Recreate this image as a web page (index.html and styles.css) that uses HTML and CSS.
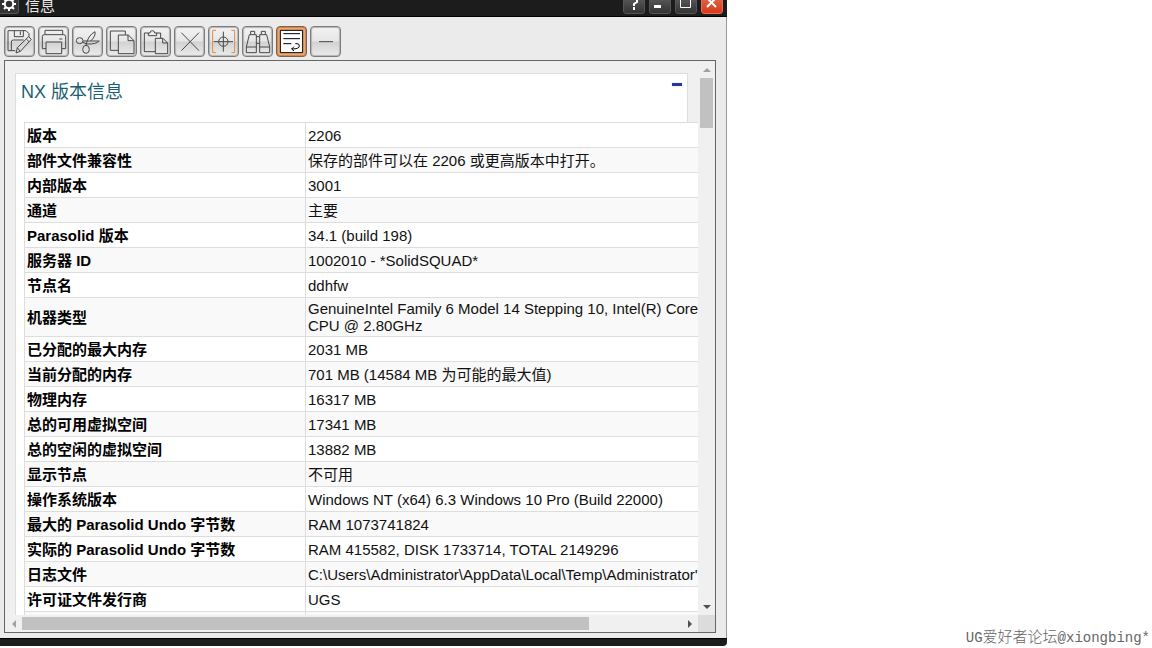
FILE: index.html
```html
<!DOCTYPE html>
<html lang="zh-CN">
<head>
<meta charset="utf-8">
<title>信息</title>
<link rel="stylesheet" href="styles.css">
</head>
<body>
<main class="window">
  <header class="titlebar">
    <span class="gear"><svg viewBox="0 0 18 18"><circle cx="9" cy="9" r="4.2"/><path d="M9 2v3M9 13v3M2 9h3M13 9h3M4 4l2 2M12 12l2 2M14 4l-2 2M4 14l2-2"/></svg></span>
    <h1 class="title">信息</h1>
    <div class="controls">
      <button class="ctl" aria-label="帮助"><svg viewBox="0 0 22 22"><path d="M8 8V6h6v4l-3 2v2M11 15v3"/></svg></button>
      <button class="ctl" aria-label="最小化"><svg viewBox="0 0 22 22"><path d="M5 14.500h7" stroke-width="3"/></svg></button>
      <button class="ctl" aria-label="最大化"><svg viewBox="0 0 22 22"><path d="M5.500 5.500h10v10h-10z" stroke-width="1"/></svg></button>
      <button class="ctl close" aria-label="关闭"><svg viewBox="0 0 22 22"><path d="M6 6l9 9M15 6l-9 9"/></svg></button>
    </div>
  </header>
  <div class="content">
    <div class="toolbar">
      <button class="tool" aria-label="另存为"><svg viewBox="12 78 93 93"><path d="M87 110V101L78 92H24V152H46M43 92V110H70V92M61 94V105M34 152V126Q34 120 40 120H71M48 159L52 143L86 110L94 118L61 154ZM52 143L61 154M79 117L87 125"/></svg></button>
      <button class="tool" aria-label="打印"><svg viewBox="114 78 93 93"><path d="M138 146H127V110Q127 104 133 104H191Q197 104 197 110V146H186M135 104V91H188V104M138 126H185V161H138ZM178 117H187"/></svg></button>
      <button class="tool" aria-label="剪切"><svg viewBox="216 78 93 93"><ellipse cx="239" cy="122" rx="10" ry="9"/><ellipse cx="258" cy="148" rx="10" ry="12"/><path d="M249 123L298 123Q289 133 261 132L248 127M285 95Q263 107 258 136M285 95Q288 108 272 123"/></svg></button>
      <button class="tool" aria-label="复制"><svg viewBox="318 78 93 93"><path d="M355 151H331V93H376V104M355 105H385L402 122V161H355ZM384 105V122H402"/></svg></button>
      <button class="tool" aria-label="粘贴"><svg viewBox="420 78 93 93"><path d="M445 99H433V155H465M469 99H482V114M445 99V107H470V99H464Q464 92 457 92Q450 92 450 99ZM466 115H489L503 129V161H466ZM488 115V129H503"/></svg></button>
      <button class="tool" aria-label="删除"><svg viewBox="12 78 93 93"><path d="M34 98L87 152M87 98L34 152"/></svg></button>
      <button class="tool" aria-label="选择"><svg viewBox="114 78 93 93"><path class="accent" d="M138 91H128V158H138M184 91H194V158H184"/><circle cx="160" cy="125" r="14"/><path d="M160 95V155M131 125H189"/></svg></button>
      <button class="tool" aria-label="查找"><svg viewBox="216 78 93 93"><path d="M242 94H254V104H259V158H229V141L238 104H242ZM229 141H259M242 104H254M286 94H274V104H269V158H299V141L290 104H286ZM269 141H299M274 104H286M259 110H269M259 130H269"/></svg></button>
      <button class="tool active" aria-label="自动换行" aria-pressed="true"><svg viewBox="318 78 93 93"><path class="page" d="M331 91H398V158H331Z"/><path class="ink" d="M340 101H390M340 116H390M340 131H364M376 131H381Q388 131 388 138Q388 147 365 147M372 140L365 147L372 153"/></svg></button>
      <button class="tool" aria-label="折叠"><svg viewBox="420 78 93 93"><path d="M447 125H489"/></svg></button>
    </div>
    <div class="viewer">
      <div class="page-area">
        <section class="card">
          <div class="card-head">
            <h2 class="card-title">NX 版本信息</h2>
            <button class="collapse" aria-label="收起"></button>
          </div>
          <table class="info">
            <tbody>
              <tr><th scope="row">版本</th><td>2206</td></tr>
              <tr><th scope="row">部件文件兼容性</th><td>保存的部件可以在 2206 或更高版本中打开。</td></tr>
              <tr><th scope="row">内部版本</th><td>3001</td></tr>
              <tr><th scope="row">通道</th><td>主要</td></tr>
              <tr><th scope="row">Parasolid 版本</th><td>34.1 (build 198)</td></tr>
              <tr><th scope="row">服务器 ID</th><td>1002010 - *SolidSQUAD*</td></tr>
              <tr><th scope="row">节点名</th><td>ddhfw</td></tr>
              <tr><th scope="row">机器类型</th><td>GenuineIntel Family 6 Model 14 Stepping 10, Intel(R) Core<br>CPU @ 2.80GHz</td></tr>
              <tr><th scope="row">已分配的最大内存</th><td>2031 MB</td></tr>
              <tr><th scope="row">当前分配的内存</th><td>701 MB (14584 MB 为可能的最大值)</td></tr>
              <tr><th scope="row">物理内存</th><td>16317 MB</td></tr>
              <tr><th scope="row">总的可用虚拟空间</th><td>17341 MB</td></tr>
              <tr><th scope="row">总的空闲的虚拟空间</th><td>13882 MB</td></tr>
              <tr><th scope="row">显示节点</th><td>不可用</td></tr>
              <tr><th scope="row">操作系统版本</th><td>Windows NT (x64) 6.3 Windows 10 Pro (Build 22000)</td></tr>
              <tr><th scope="row">最大的 Parasolid Undo 字节数</th><td>RAM 1073741824</td></tr>
              <tr><th scope="row">实际的 Parasolid Undo 字节数</th><td>RAM 415582, DISK 1733714, TOTAL 2149296</td></tr>
              <tr><th scope="row">日志文件</th><td>C:\Users\Administrator\AppData\Local\Temp\Administrator'</td></tr>
              <tr><th scope="row">许可证文件发行商</th><td>UGS</td></tr>
              <tr><th scope="row"></th><td></td></tr>
            </tbody>
          </table>
        </section>
      </div>
      <div class="vbar">
        <button class="arrow dim" aria-label="向上滚动"><svg viewBox="0 0 8 8"><path d="M0 6L4 2L8 6Z"/></svg></button>
        <div class="vtrack"><div class="vthumb"></div></div>
        <button class="arrow" aria-label="向下滚动"><svg viewBox="0 0 8 8"><path d="M0 2L4 6L8 2Z"/></svg></button>
      </div>
      <div class="hbar">
        <button class="arrow dim" aria-label="向左滚动"><svg viewBox="0 0 8 8"><path d="M6 0L2 4L6 8Z"/></svg></button>
        <div class="htrack"><div class="hthumb"></div></div>
        <button class="arrow" aria-label="向右滚动"><svg viewBox="0 0 8 8"><path d="M2 0L6 4L2 8Z"/></svg></button>
      </div>
      <div class="corner"></div>
    </div>
  </div>
  <footer class="frame-bottom"></footer>
</main>
<aside class="credit">UG<span class="credit-cjk">爱好者论坛</span>@xiongbing*</aside>
</body>
</html>
```

FILE: styles.css
```css
* { box-sizing: border-box; }

body {
  margin: 0;
  height: 100vh;
  display: flex;
  overflow: hidden;
  background: #fff;
  color: #111;
  font-family: "Liberation Sans", "Noto Sans CJK SC", sans-serif;
  font-size: 15px;
}

button {
  padding: 0;
  border: 0;
  background: none;
  display: flex;
  align-items: center;
  justify-content: center;
  flex: none;
}

svg { display: block; fill: none; }

.window {
  flex: 1;
  min-width: 0;
  margin-bottom: 2px;
  display: flex;
  flex-direction: column;
}

.titlebar {
  flex: none;
  height: 17px;
  padding: 0 4px 2px 0;
  display: flex;
  align-items: flex-end;
  overflow: hidden;
  background: #1c1c1c;
  border-bottom: 1px solid #000;
  color: #e8e8e8;
}

.gear {
  width: 19px;
  height: 22px;
  margin-right: 6px;
  padding-top: 2px;
  border: 1px solid #555;
  border-left: 0;
  border-radius: 0 0 3px 0;
  background: #333;
}
.gear svg { width: 18px; height: 18px; stroke: #fff; stroke-width: 2; }

.title {
  margin: 0;
  flex: 1;
  font-size: 15px;
  line-height: 16px;
  font-weight: 400;
}

.controls { display: flex; gap: 4px; }
.ctl {
  width: 22px;
  height: 22px;
  border: 1px solid #555;
  border-radius: 3px;
  background: linear-gradient(#666, #333);
}
.ctl svg { width: 22px; height: 22px; flex: none; stroke: #fff; stroke-width: 2; }
.close { border-color: #e8705a; background: linear-gradient(#e0735a, #d93a18); }

.content {
  flex: 1;
  min-height: 0;
  display: flex;
  flex-direction: column;
  padding: 9px 10px 5px 4px;
  background: #ebebeb;
  border-right: 1px solid #999;
}

.toolbar {
  flex: none;
  display: flex;
  gap: 3px;
  margin-bottom: 3px;
}
.tool {
  width: 31px;
  height: 31px;
  border: 1px solid #7c7c7c;
  border-radius: 4px;
  box-shadow: inset 0 0 1px 1px #b4b4b4;
  background: linear-gradient(#f3f3f3 0%, #e6e6e6 48%, #d2d2d2 52%, #ececec 100%);
}
.tool svg { width: 31px; height: 31px; flex: none; stroke: #484848; stroke-width: 3; }
.tool .accent { stroke: #dc8a48; }
.active { background: #f2aa74; border-color: #80604c; box-shadow: inset 0 0 1px 1px #c98458; }
.tool .page { fill: #fff; stroke: #000; }
.tool .ink { stroke: #000; }

.viewer {
  flex: 1;
  min-height: 0;
  display: grid;
  grid-template: minmax(0, 1fr) 17px / minmax(0, 1fr) 17px;
  border: 1px solid #666;
  background: #f0f0f0;
}

.page-area { overflow: hidden; padding: 12px 10px 0; }

.card {
  min-height: 100%;
  background: #fff;
  border: 1px solid #ddd;
}
.card-head {
  height: 48px;
  padding: 5px 5px 0;
  display: flex;
  justify-content: space-between;
  align-items: flex-start;
}
.card-title {
  margin: 0;
  font-size: 18px;
  line-height: 26px;
  font-weight: 400;
  color: #1c5f72;
}
.collapse {
  width: 10px;
  height: 3px;
  margin-top: 4px;
  background: #2038a0;
  box-shadow: 0 0 1px #6a86e8;
}

.info {
  width: 720px;
  margin-left: 8px;
  border-collapse: collapse;
  table-layout: fixed;
  background: #fff;
}
.info th,
.info td {
  height: 25px;
  padding: 2px;
  border: 1px solid #ddd;
  line-height: 17px;
  text-align: left;
  vertical-align: middle;
  white-space: nowrap;
}
.info th { width: 281px; color: #000; }
.info tr:nth-child(even) { background: #f9f9f9; }

.vbar, .hbar { display: flex; background: #f0f0f0; }
.vbar { flex-direction: column; }
.arrow { width: 17px; height: 17px; }
.arrow svg { width: 8px; height: 8px; fill: #505050; }
.dim svg { fill: #a0a0a0; }
.vtrack { flex: 1; padding: 0 2px; }
.vthumb { height: 50px; background: #c1c1c1; }
.htrack { flex: 1; padding: 2px 0; }
.hthumb { width: 86%; height: 13px; background: #c1c1c1; }
.corner { background: #dcdcdc; }

.frame-bottom {
  flex: none;
  height: 8px;
  background: #1c1c1c;
  border-top: 1px solid #000;
  border-radius: 0 0 4px 0;
}

.credit {
  flex: none;
  width: 425px;
  align-self: flex-end;
  padding-right: 2px;
  text-align: right;
  font-family: "Liberation Mono", "Noto Sans CJK SC", monospace;
  font-size: 14px;
  line-height: 20px;
  color: #666;
}
.credit-cjk {
  font-family: "Noto Sans CJK SC", sans-serif;
  font-size: 15px;
  font-weight: 300;
}
```
